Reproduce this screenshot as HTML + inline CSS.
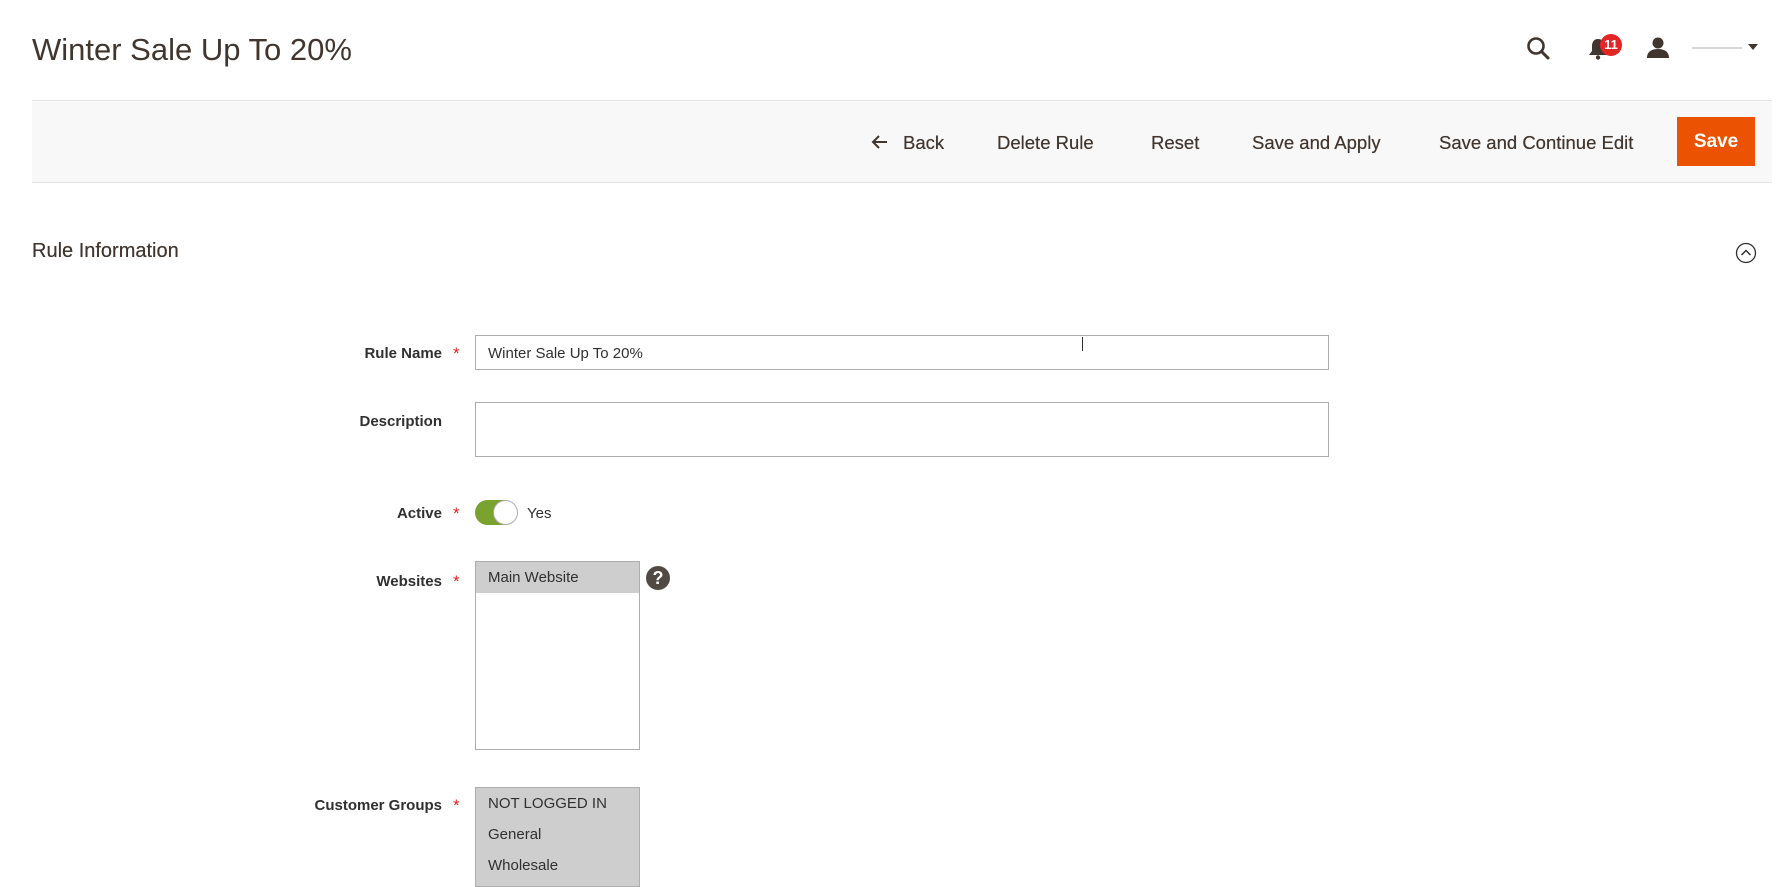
<!DOCTYPE html>
<html><head><meta charset="utf-8"><style>
*{box-sizing:border-box;margin:0;padding:0}
body{width:1788px;height:877px;overflow:hidden;background:#fff;font-family:"Liberation Sans",sans-serif;color:#303030;position:relative}
.a{position:absolute}
h1{position:absolute;left:32px;top:32px;font-size:31px;font-weight:normal;color:#41362f}
.bar{left:32px;top:100px;width:1740px;height:83px;background:#f8f8f8;border-top:1px solid #e3e3e3;border-bottom:1px solid #e3e3e3}
.btn{position:absolute;top:132px;font-size:18.5px;color:#41362f;white-space:nowrap;text-shadow:0 0 0.4px #41362f}
.save{left:1677px;top:117px;width:78px;height:49px;background:#eb5202;color:#fff;font-size:19px;font-weight:bold;display:flex;align-items:center;justify-content:center}
.lbl{position:absolute;right:1346px;font-size:15px;font-weight:bold;color:#303030;text-align:right;white-space:nowrap}
.star{position:absolute;left:453px;color:#e22626;font-size:17px}
.inp{position:absolute;left:475px;width:854px;border:1px solid #adadad;background:#fff}
.sel{position:absolute;left:475px;width:165px;border:1px solid #adadad;background:#fff}
.opt{height:31px;background:#cecece;font-size:15px;padding-left:12px;line-height:31px;color:#303030}
</style></head><body>
<h1>Winter Sale Up To 20%</h1>
<svg class="a" style="left:1526px;top:36px" width="26" height="26" viewBox="0 0 26 26"><circle cx="10" cy="10" r="7.5" fill="none" stroke="#41362f" stroke-width="2.6"/><path d="M15.5 15.5L22 22" stroke="#41362f" stroke-width="3" stroke-linecap="round"/></svg>
<svg class="a" style="left:1588px;top:38px" width="20" height="22" viewBox="0 0 20 22"><path d="M10 1c-4 0-6 3-6 7v5l-3 4h18l-3-4V8c0-4-2-7-6-7z" fill="#41362f"/><circle cx="10" cy="19.5" r="2.2" fill="#41362f"/></svg>
<div class="a" style="left:1600px;top:34px;width:22px;height:22px;border-radius:50%;background:#e22626;color:#fff;font-size:13px;font-weight:bold;text-align:center;line-height:22px">11</div>
<svg class="a" style="left:1647px;top:36px" width="22" height="22" viewBox="0 0 22 22"><circle cx="11" cy="7" r="5.5" fill="#41362f"/><path d="M0 22c0-6 4-9 11-9s11 3 11 9z" fill="#41362f"/></svg>
<div class="a" style="left:1692px;top:47px;width:50px;height:2px;background:#d8d8d8"></div>
<div class="a" style="left:1748px;top:44px;width:0;height:0;border-left:5px solid transparent;border-right:5px solid transparent;border-top:6px solid #41362f"></div>
<div class="a bar"></div>
<svg class="a" style="left:871px;top:134px" width="18" height="16" viewBox="0 0 18 16"><path d="M16 8H3M8 2L2 8l6 6" fill="none" stroke="#41362f" stroke-width="2"/></svg>
<div class="btn" style="left:903px">Back</div>
<div class="btn" style="left:997px">Delete Rule</div>
<div class="btn" style="left:1151px">Reset</div>
<div class="btn" style="left:1252px">Save and Apply</div>
<div class="btn" style="left:1439px">Save and Continue Edit</div>
<div class="a save">Save</div>
<div class="a" style="left:32px;top:240px;font-size:20px;color:#41362f;text-shadow:0 0 0.4px #41362f">Rule Information</div>
<svg class="a" style="left:1735px;top:242px" width="22" height="22" viewBox="0 0 22 22"><circle cx="11" cy="11" r="9.5" fill="none" stroke="#303030" stroke-width="1.3"/><path d="M6.5 13l4.5-4.5 4.5 4.5" fill="none" stroke="#303030" stroke-width="1.5"/></svg>
<div class="lbl" style="top:345px">Rule Name</div><div class="star" style="top:344px">*</div>
<div class="inp" style="top:335px;height:35px;font-size:15px;padding:9px 12px">Winter Sale Up To 20%</div>
<div class="a" style="left:1082px;top:337px;width:1px;height:14px;background:#333"></div>
<div class="lbl" style="top:413px">Description</div>
<div class="inp" style="top:402px;height:55px"></div>
<div class="lbl" style="top:505px">Active</div><div class="star" style="top:504px">*</div>
<div class="a" style="left:475px;top:500px;width:42px;height:25px;border-radius:13px;background:#79a22e;border:1px solid #79a22e"></div>
<div class="a" style="left:493px;top:500px;width:25px;height:25px;border-radius:50%;background:#fff;border:1px solid #adadad"></div>
<div class="a" style="left:527px;top:505px;font-size:15px;color:#303030">Yes</div>
<div class="lbl" style="top:573px">Websites</div><div class="star" style="top:572px">*</div>
<div class="sel" style="top:561px;height:189px"><div class="opt">Main Website</div></div>
<div class="a" style="left:646px;top:566px;width:24px;height:24px;border-radius:50%;background:#514943;color:#fff;font-weight:bold;font-size:18px;text-align:center;line-height:24px">?</div>
<div class="lbl" style="top:797px">Customer Groups</div><div class="star" style="top:796px">*</div>
<div class="sel" style="top:787px;height:100px;background:#cecece"><div class="opt">NOT LOGGED IN</div><div class="opt">General</div><div class="opt">Wholesale</div></div>
</body></html>
